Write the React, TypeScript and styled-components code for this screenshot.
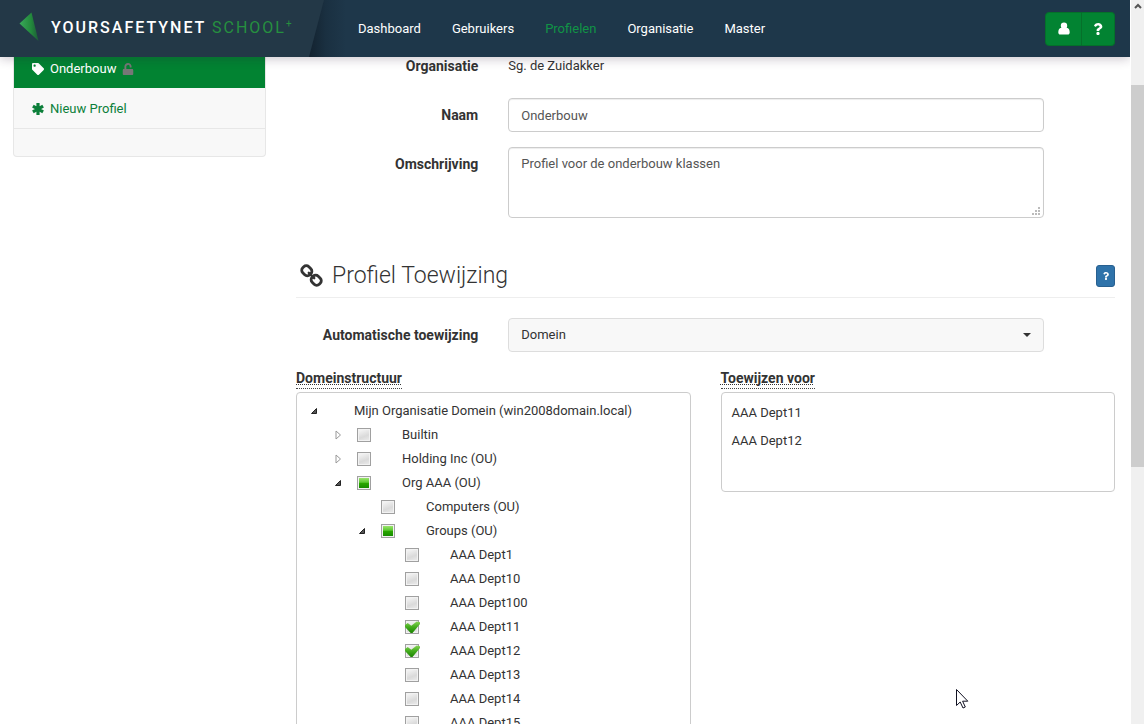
import React, { useEffect, useRef, useState } from "react";
import styled, { createGlobalStyle, css } from "styled-components";
import { FaQuestion, FaTag, FaUnlock } from "react-icons/fa";

const GlobalStyle = createGlobalStyle`
  * { box-sizing: border-box; }
  body {
    margin: 0;
    background: #fff;
    color: #333;
    font-family: Roboto, "Open Sans", sans-serif;
    font-size: 13px;
    line-height: 20px;
  }
  button, input, textarea, select { font: inherit; }
`;

const Shell = styled.div`
  display: grid;
  grid-template-columns: minmax(0, 1fr) 14px;
  height: 100vh;
  overflow: hidden;
`;

const Page = styled.div`
  min-width: 0;
  overflow: hidden;
`;

const Header = styled.header`
  position: relative;
  z-index: 2;
  display: flex;
  align-items: center;
  height: 57px;
  padding-right: 15px;
  background: linear-gradient(to right, #1e374a 305px, #12202c 306px, #1a3041 326px, #1e374a 346px);
  box-shadow: 0 2px 10px rgba(40, 20, 50, 0.24);
`;

const Brand = styled.a`
  display: flex;
  align-items: center;
  gap: 12px;
  width: 324px;
  height: 100%;
  padding-left: 19px;
  background: #233847;
  clip-path: polygon(0 0, 100% 0, 309px 100%, 0 100%);
  color: #fff;
  font-size: 16px;
  font-weight: 500;
  letter-spacing: 2px;
  text-decoration: none;
  white-space: nowrap;
`;

const BrandMark = styled.svg`
  width: 20px;
  height: 30px;
  margin-bottom: 6px;
`;

const BrandName = styled.span`
  padding-bottom: 2px;
`;

const BrandAccent = styled.span`
  color: #26903f;
  font-weight: 400;

  sup {
    font-size: 10px;
    line-height: 0;
  }
`;

const Nav = styled.nav`
  display: flex;
  flex: 1;
  gap: 31px;
  padding-left: 34px;
`;

const NavLink = styled.a<{ $active?: boolean }>`
  color: ${(p) => (p.$active ? "#119346" : "#fff")};
  text-decoration: none;
`;

const ButtonGroup = styled.div`
  display: flex;
`;

const HeaderButton = styled.button`
  display: flex;
  align-items: center;
  justify-content: center;
  width: 37px;
  height: 34px;
  padding: 0;
  border: 1px solid #05702a;
  border-radius: 4px 0 0 4px;
  background: #028332;
  color: #fff;
  font-size: 12px;

  & + & {
    width: 33px;
    border-left: 0;
    border-radius: 0 4px 4px 0;
  }
`;

const Content = styled.div`
  display: grid;
  grid-template-columns: 253px minmax(0, 1fr);
  gap: 30px;
  align-items: start;
  margin-top: -9px;
  padding: 0 15px 0 13px;
`;

const Sidebar = styled.nav`
  display: flex;
  flex-direction: column;
  height: 109px;
  border: 1px solid #e7e7e7;
  border-top: 0;
  border-radius: 0 0 4px 4px;
  background: #f8f8f8;
`;

const SideLink = styled.a<{ $active?: boolean }>`
  display: flex;
  align-items: center;
  gap: 6px;
  height: ${(p) => (p.$active ? "40px" : "41px")};
  padding: 2px 18px 0;
  border-bottom: ${(p) => (p.$active ? "0" : "1px solid #e7e7e7")};
  background: ${(p) => (p.$active ? "#028332" : "transparent")};
  color: ${(p) => (p.$active ? "#fff" : "#0c7f3a")};
  text-decoration: none;

  svg { width: 12px; height: 12px; }
  svg:last-of-type:not(:first-of-type) { color: #777; }
`;

const Main = styled.main`
  min-width: 0;
  padding-top: 1px;
`;

const FormRow = styled.div`
  display: grid;
  grid-template-columns: 3fr 8fr 1fr;
  margin: 0 -15px 15px;
  line-height: 20px;
`;

const labelText = css`
  padding: 7px 15px;
  font-size: 14px;
  font-weight: 700;
  text-align: right;
`;

const FieldLabel = styled.label`${labelText}`;
const StaticLabel = styled.span`${labelText}`;

const Field = styled.div`
  position: relative;
  display: flex;
  margin: 0 15px;
`;

const StaticText = styled.span`
  padding: 7px 0;
`;

const fieldBox = css`
  width: 100%;
  padding: 6px 12px;
  border: 1px solid #ccc;
  border-radius: 4px;
  background: #fff;
  color: #555;
  box-shadow: inset 0 1px 1px rgba(0, 0, 0, 0.075);
  outline: 0;
`;

const TextInput = styled.input`
  ${fieldBox}
  height: 34px;
`;

const TextArea = styled.textarea`
  ${fieldBox}
  height: 71px;
  resize: none;
`;

const Grip = styled.svg`
  position: absolute;
  right: 3px;
  bottom: 2px;
  width: 9px;
  height: 9px;
  fill: #bbb;
`;

const Select = styled.select`
  ${fieldBox}
  height: 34px;
  border-color: #ddd;
  background: #f8f8f8;
  color: #333;
  box-shadow: none;
  appearance: none;
`;

const Caret = styled.span`
  position: absolute;
  top: 15px;
  right: 13px;
  border: 4px solid transparent;
  border-top-color: #333;
  border-bottom: 0;
  pointer-events: none;
`;

const SectionHead = styled.div`
  display: flex;
  align-items: center;
  justify-content: space-between;
  height: 44px;
  margin: 36px 0 20px;
  border-bottom: 1px solid #eee;
`;

const SectionTitle = styled.h2`
  display: flex;
  align-items: center;
  gap: 9px;
  margin: 0;
  padding-left: 4px;
  font-size: 23px;
  font-weight: 300;
  line-height: 26px;

  svg { width: 23px; height: 23px; }
`;

const HelpButton = styled.button`
  display: flex;
  align-items: center;
  justify-content: center;
  width: 19px;
  height: 22px;
  padding: 0;
  border: 1px solid #286090;
  border-radius: 3px;
  background: #2f73aa;
  color: #fff;
  font-size: 8px;
`;

const Columns = styled.div`
  display: grid;
  grid-template-columns: repeat(2, minmax(0, 1fr));
  gap: 30px;
  align-items: start;
`;

const PanelTitle = styled.h3`
  display: table;
  margin: 0 0 3px;
  padding-top: 2px;
  border-bottom: 1px dotted #444;
  font-size: 14px;
  font-weight: 700;
  line-height: 19px;
  text-decoration: underline dotted 1px;
  text-underline-offset: 1px;
`;

const Panel = styled.div`
  border: 1px solid #ccc;
  border-radius: 4px;
`;

const Tree = styled.ul`
  margin: 0;
  padding: 6px 5px;
  list-style: none;
`;

const Branch = styled.ul`
  margin: 0;
  padding: 0 0 0 24px;
  list-style: none;
`;

const TreeRow = styled.div`
  display: flex;
  align-items: center;
  height: 24px;
`;

const Toggle = styled.button`
  display: flex;
  align-items: center;
  justify-content: center;
  width: 24px;
  height: 24px;
  padding: 0;
  border: 0;
  background: none;

  svg { width: 8px; height: 10px; }
`;

const ToggleSpace = styled.span`
  width: 24px;
`;

const RootName = styled.span`
  padding-left: 28px;
`;

const NodeLabel = styled.label`
  display: flex;
  align-items: center;
  gap: 31px;
  padding-left: 7px;
`;

const CheckBox = styled.input`
  position: relative;
  appearance: none;
  width: 14px;
  height: 14px;
  margin: 0;
  border: 1px solid #a0a0a0;
  background: linear-gradient(160deg, #f4f4f4 10%, #dadada 60%, #e8e8e8 90%);
  box-shadow: inset 0 0 0 1px #f2f2f2;

  &:checked::before {
    content: "";
    position: absolute;
    inset: 0 -2px 0 -1px;
    background: linear-gradient(#8fd85c, #43ac1d 50%, #1c8402);
    clip-path: polygon(0 34%, 18% 16%, 42% 40%, 78% 4%, 100% 10%, 100% 24%, 50% 100%, 38% 100%, 0 50%);
  }

  &:indeterminate::before {
    content: "";
    position: absolute;
    inset: 1px;
    background: linear-gradient(#9be46c, #5cc933 42%, #28a500 55%, #168c00);
  }
`;

const AssignedList = styled.ul`
  min-height: 98px;
  margin: 0;
  padding: 6px 10px;
  line-height: 28px;
  list-style: none;
`;

const ScrollTrack = styled.div`
  display: flex;
  flex-direction: column;
  align-items: center;
  border-left: 1px solid #fff;
  background: #f0f0f0;

  svg { width: 8px; height: 6px; margin: 3px 0 76px; }
`;

const ScrollThumb = styled.div`
  width: 100%;
  height: 52.8%;
  background: #cdcdcd;
`;

const Pointer = styled.svg`
  position: fixed;
  top: 689px;
  left: 956px;
  width: 13px;
  height: 20px;
`;

type Node = {
  name: string;
  state?: "checked" | "partial";
  open?: boolean;
  children?: Node[];
};

const departments: Node[] = ["1", "10", "100", "11", "12", "13", "14", "15"].map((n) => ({
  name: `AAA Dept${n}`,
  state: n === "11" || n === "12" ? "checked" : undefined,
}));

const domain: Node[] = [
  { name: "Builtin", open: false },
  { name: "Holding Inc (OU)", open: false },
  {
    name: "Org AAA (OU)",
    state: "partial",
    open: true,
    children: [
      { name: "Computers (OU)" },
      { name: "Groups (OU)", state: "partial", open: true, children: departments },
    ],
  },
];

function ToggleIcon({ open }: { open: boolean }) {
  return open ? (
    <svg viewBox="0 0 8 10">
      <path d="M6.5 2.5v5h-5z" fill="#555" stroke="#222" />
    </svg>
  ) : (
    <svg viewBox="0 0 8 10">
      <path d="M2 1v8l4.500-4z" fill="#fff" stroke="#999" />
    </svg>
  );
}

function TreeNode({ node }: { node: Node }) {
  const box = useRef<HTMLInputElement>(null);
  const [open, setOpen] = useState(Boolean(node.open));

  useEffect(() => {
    if (box.current) box.current.indeterminate = node.state === "partial";
  }, [node.state]);

  return (
    <li>
      <TreeRow>
        {node.open === undefined ? (
          <ToggleSpace />
        ) : (
          <Toggle type="button" aria-label={node.name} aria-expanded={open} onClick={() => setOpen(!open)}>
            <ToggleIcon open={open} />
          </Toggle>
        )}
        <NodeLabel>
          <CheckBox ref={box} type="checkbox" defaultChecked={node.state === "checked"} />
          {node.name}
        </NodeLabel>
      </TreeRow>
      {open && node.children && (
        <Branch>
          {node.children.map((child) => (
            <TreeNode key={child.name} node={child} />
          ))}
        </Branch>
      )}
    </li>
  );
}

function UserIcon() {
  return (
    <svg width="12" height="13" viewBox="0 0 12 13" fill="currentColor">
      <path d="M6 .5a3.200 3.200 0 0 1 3.200 3.200c0 .8-.2 1.500-.6 2.100C10.900 6 11.700 8 11.700 10.400c0 1.200-.8 2.100-1.900 2.100H2.200C1.100 12.500.3 11.600.3 10.400.3 8 1.100 6 3.400 5.800a3.700 3.700 0 0 1-.6-2.100A3.200 3.200 0 0 1 6 .5z" />
    </svg>
  );
}

function AsteriskIcon() {
  return (
    <svg viewBox="0 0 12 12" stroke="currentColor" strokeWidth="3.200">
      <path d="M6 0v12M.9 3.100l10.200 5.800M.9 8.900l10.200-5.800" />
    </svg>
  );
}

function LinkIcon() {
  return (
    <svg viewBox="0 0 23 23" fill="none" stroke="#333" strokeWidth="2.800">
      <rect x="1.800" y="2.400" width="10" height="8.600" rx="3.600" transform="rotate(45 6.800 6.700)" />
      <rect x="11.200" y="11.900" width="10" height="8.600" rx="3.600" transform="rotate(45 16.200 16.200)" />
      <path d="M8.800 8.800l5.400 5.400" strokeWidth="2.400" strokeLinecap="round" />
    </svg>
  );
}

export default function App() {
  return (
    <>
      <GlobalStyle />
      <Shell>
        <Page>
          <Header>
            <Brand href="#">
              <BrandMark viewBox="0 0 20 30">
                <defs>
                  <linearGradient id="mark" x1="0" x2="1">
                    <stop offset="0" stopColor="#3aa85a" />
                    <stop offset="0.600" stopColor="#238a3c" />
                    <stop offset="1" stopColor="#1c5a38" />
                  </linearGradient>
                </defs>
                <path d="M.5 12.500L12.500 1.500 19.500 30z" fill="url(#mark)" />
              </BrandMark>
              <BrandName>
                YOURSAFETYNET <BrandAccent>SCHOOL<sup>+</sup></BrandAccent>
              </BrandName>
            </Brand>
            <Nav>
              <NavLink href="#">Dashboard</NavLink>
              <NavLink href="#">Gebruikers</NavLink>
              <NavLink href="#" $active>Profielen</NavLink>
              <NavLink href="#">Organisatie</NavLink>
              <NavLink href="#">Master</NavLink>
            </Nav>
            <ButtonGroup>
              <HeaderButton type="button" aria-label="Account"><UserIcon /></HeaderButton>
              <HeaderButton type="button" aria-label="Help"><FaQuestion /></HeaderButton>
            </ButtonGroup>
          </Header>

          <Content>
            <Sidebar>
              <SideLink href="#" $active><FaTag />Onderbouw<FaUnlock /></SideLink>
              <SideLink href="#"><AsteriskIcon />Nieuw Profiel</SideLink>
            </Sidebar>

            <Main>
              <FormRow>
                <StaticLabel>Organisatie</StaticLabel>
                <Field><StaticText>Sg. de Zuidakker</StaticText></Field>
              </FormRow>
              <FormRow>
                <FieldLabel htmlFor="name">Naam</FieldLabel>
                <Field><TextInput id="name" defaultValue="Onderbouw" /></Field>
              </FormRow>
              <FormRow>
                <FieldLabel htmlFor="description">Omschrijving</FieldLabel>
                <Field>
                  <TextArea id="description" defaultValue="Profiel voor de onderbouw klassen" />
                  <Grip viewBox="0 0 9 9">
                    <path d="M6 0h2v2H6zM3 3h2v2H3zM6 3h2v2H6zM0 6h2v2H0zM3 6h2v2H3zM6 6h2v2H6z" />
                  </Grip>
                </Field>
              </FormRow>

              <SectionHead>
                <SectionTitle><LinkIcon />Profiel Toewijzing</SectionTitle>
                <HelpButton type="button" aria-label="Help"><FaQuestion /></HelpButton>
              </SectionHead>

              <FormRow>
                <FieldLabel htmlFor="assignment">Automatische toewijzing</FieldLabel>
                <Field>
                  <Select id="assignment" defaultValue="Domein">
                    <option>Domein</option>
                  </Select>
                  <Caret />
                </Field>
              </FormRow>

              <Columns>
                <section>
                  <PanelTitle>Domeinstructuur</PanelTitle>
                  <Panel>
                    <Tree>
                      <li>
                        <TreeRow>
                          <Toggle type="button" aria-label="Domein" aria-expanded><ToggleIcon open /></Toggle>
                          <RootName>Mijn Organisatie Domein (win2008domain.local)</RootName>
                        </TreeRow>
                        <Branch>
                          {domain.map((node) => <TreeNode key={node.name} node={node} />)}
                        </Branch>
                      </li>
                    </Tree>
                  </Panel>
                </section>
                <section>
                  <PanelTitle>Toewijzen voor</PanelTitle>
                  <Panel>
                    <AssignedList>
                      <li>AAA Dept11</li>
                      <li>AAA Dept12</li>
                    </AssignedList>
                  </Panel>
                </section>
              </Columns>
            </Main>
          </Content>
        </Page>
        <ScrollTrack>
          <svg viewBox="0 0 8 6" fill="none" stroke="#555" strokeWidth="2"><path d="M1 5l3-3 3 3" /></svg>
          <ScrollThumb />
        </ScrollTrack>
      </Shell>
      <Pointer viewBox="0 0 13 20">
        <path d="M.5.5v16l3.700-3.500 2.800 6 2.300-1-2.700-5.800h5.200z" fill="#fff" stroke="#112" />
      </Pointer>
    </>
  );
}
